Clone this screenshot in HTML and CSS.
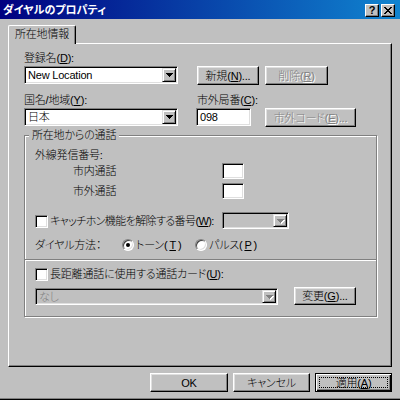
FILE: index.html
```html
<!DOCTYPE html>
<html lang="ja">
<head>
  <meta charset="UTF-8">
  <title>ダイヤルのプロパティ</title>
  <link rel="stylesheet" href="styles.css">
</head>
<body>
  <div class="window">
    <!-- Title Bar -->
    <div class="titlebar">
      <span class="title">ダイヤルのプロパティ</span>
      <div class="caption-btns">
        <span class="cap-btn">?</span>
        <span class="cap-btn">
          <svg width="8" height="7" viewBox="0 0 8 7" shape-rendering="crispEdges">
            <path d="M0 0h2v1h1v1h2v-1h1v-1h2v1h-1v1h-1v1h-1v1h1v1h1v1h1v1h-2v-1h-1v-1h-2v1h-1v1h-2v-1h1v-1h1v-1h1v-1h-1v-1h-1v-1h-1z" fill="#000"/>
          </svg>
        </span>
      </div>
    </div>

    <div class="content">
      <!-- Tabs -->
      <div class="tabs">
        <div class="tab">所在地情報</div>
      </div>

      <!-- Tab Panel -->
      <div class="panel">
        <div class="label">登録名(<u>D</u>):</div>
        <div class="ctrl-row">
          <div class="combo combo-main">
            <span class="combo-text">New Location</span>
            <span class="drop"><svg width="7" height="4" viewBox="0 0 7 4" shape-rendering="crispEdges"><path d="M0 0h7v1h-1v1h-1v1h-1v1h-1v-1h-1v-1h-1v-1h-1z"/></svg></span>
          </div>
          <button class="btn btn-new">新規(<u>N</u>)...</button>
          <button class="btn btn-del" disabled>削除(<u>R</u>)</button>
        </div>

        <div class="label-row">
          <div class="label label-country">国名/地域(<u>Y</u>):</div>
          <div class="label">市外局番(<u>C</u>):</div>
        </div>
        <div class="ctrl-row">
          <div class="combo combo-main">
            <span class="combo-text">日本</span>
            <span class="drop"><svg width="7" height="4" viewBox="0 0 7 4" shape-rendering="crispEdges"><path d="M0 0h7v1h-1v1h-1v1h-1v1h-1v-1h-1v-1h-1v-1h-1z"/></svg></span>
          </div>
          <div class="field field-code">098</div>
          <button class="btn btn-code" disabled>市外コード(<u>E</u>)...</button>
        </div>

        <!-- Calls from this location -->
        <fieldset class="group">
          <legend>所在地からの通話</legend>
          <div class="sub-label">外線発信番号:</div>
          <div class="num-row">
            <span class="num-label">市内通話</span>
            <span class="field field-small"></span>
          </div>
          <div class="num-row num-row-second">
            <span class="num-label">市外通話</span>
            <span class="field field-small"></span>
          </div>

          <div class="check-row">
            <span class="checkbox"></span>
            <span class="check-label">キャッチホン機能を解除する番号(<u>W</u>):</span>
            <div class="combo combo-wait disabled">
              <span class="combo-text"></span>
              <span class="drop"><svg width="7" height="4" viewBox="0 0 7 4" shape-rendering="crispEdges"><path d="M0 0h7v1h-1v1h-1v1h-1v1h-1v-1h-1v-1h-1v-1h-1z"/></svg></span>
            </div>
          </div>

          <div class="radio-row">
            <span class="radio-label">ダイヤル方法：</span>
            <span class="radio-opt radio-opt-first"><span class="radio on"></span>トーン(<u>T</u>)</span>
            <span class="radio-opt"><span class="radio"></span>パルス(<u>P</u>)</span>
          </div>

          <div class="separator"></div>

          <div class="check-row2">
            <span class="checkbox"></span>
            <span>長距離通話に使用する通話カード(<u>U</u>):</span>
          </div>
          <div class="card-row">
            <div class="combo combo-card disabled">
              <span class="combo-text">なし</span>
              <span class="drop"><svg width="7" height="4" viewBox="0 0 7 4" shape-rendering="crispEdges"><path d="M0 0h7v1h-1v1h-1v1h-1v1h-1v-1h-1v-1h-1v-1h-1z"/></svg></span>
            </div>
            <button class="btn btn-change">変更(<u>G</u>)...</button>
          </div>
        </fieldset>
      </div>

      <!-- Dialog Buttons -->
      <div class="footer">
        <button class="btn btn-footer btn-ok">OK</button>
        <button class="btn btn-footer">キャンセル</button>
        <button class="btn btn-footer btn-default"><span class="focus">適用(<u>A</u>)</span></button>
      </div>
    </div>
  </div>
</body>
</html>
```

FILE: styles.css
```css
/* Reset */
* {
  margin: 0;
  padding: 0;
  box-sizing: border-box;
}

body {
  width: 400px;
  height: 400px;
  overflow: hidden;
  background: #c0c0c0;
  font-family: "Liberation Sans", "Noto Sans CJK JP", sans-serif;
  font-size: 11px;
  font-weight: 300;
  line-height: 14px;
  letter-spacing: -0.2px;
  color: #000;
  font-feature-settings: "palt";
}

u {
  text-decoration: underline;
  text-underline-offset: 1px;
}

/* Window */
.window {
  width: 400px;
  height: 400px;
  background: #c0c0c0;
  border-bottom: 1px solid #000;
  box-shadow: inset 0 -1px #808080;
}

.titlebar {
  height: 19px;
  display: flex;
  align-items: center;
  justify-content: space-between;
  padding: 0 5px 0 3px;
  background: linear-gradient(to right, #000080, #1084d0);
  color: #fff;
}

.title {
  font-weight: bold;
  font-size: 11px;
  letter-spacing: 0;
}

.caption-btns {
  display: flex;
  gap: 2px;
  margin-top: 1px;
}

.cap-btn {
  width: 14px;
  height: 13px;
  display: flex;
  align-items: center;
  justify-content: center;
  background: #c0c0c0;
  border: 1px solid;
  border-color: #fff #000 #000 #fff;
  box-shadow: inset -1px -1px #808080;
  color: #000;
  font-weight: bold;
  font-size: 11px;
  line-height: 11px;
}

.content {
  padding: 6px 8px 0;
}

/* Tabs */
.tabs {
  display: flex;
  height: 18px;
}

.tab {
  position: relative;
  z-index: 1;
  width: 68px;
  height: 19px;
  padding-left: 6px;
  line-height: 16px;
  background: #c0c0c0;
  border-top: 1px solid #fff;
  border-left: 1px solid #fff;
  border-right: 1px solid #000;
  border-radius: 2px 2px 0 0;
  box-shadow: inset -1px 0 #808080;
}

.panel {
  height: 324px;
  padding: 7px 0 0 15px;
  border: 1px solid;
  border-color: #fff #000 #000 #fff;
  box-shadow: inset -1px -1px #808080;
}

.label {
  height: 14px;
  white-space: nowrap;
}

.label-row {
  display: flex;
  margin-top: 8px;
}

.label-country {
  width: 173px;
}

.ctrl-row {
  display: flex;
  align-items: flex-start;
  margin-top: 1px;
}

/* Sunken fields */
.combo,
.field {
  display: flex;
  align-items: center;
  background: #fff;
  border: 1px solid;
  border-color: #808080 #fff #fff #808080;
  box-shadow: inset 1px 1px #000, inset -1px -1px #dfdfdf;
}

.combo {
  height: 18px;
  padding: 1px;
  justify-content: space-between;
}

.combo-main {
  width: 154px;
}

.combo-text {
  padding-left: 2px;
  white-space: nowrap;
}

.drop {
  width: 14px;
  height: 14px;
  display: flex;
  align-items: center;
  justify-content: center;
  background: #c0c0c0;
  border: 1px solid;
  border-color: #dfdfdf #000 #000 #dfdfdf;
  box-shadow: inset 1px 1px #fff, inset -1px -1px #808080;
}

.drop svg {
  fill: #000;
}

.combo.disabled {
  background: #c0c0c0;
  height: 17px;
}

.combo.disabled .drop {
  height: 13px;
}

.combo.disabled .drop svg {
  fill: #808080;
  filter: drop-shadow(1px 1px 0 #fff);
}

.combo.disabled .combo-text {
  color: #808080;
}

.field {
  height: 18px;
  padding-left: 3px;
}

.field-code {
  width: 55px;
  margin-left: 18px;
}

.field-small {
  width: 22px;
  height: 16px;
}

/* Buttons */
.btn {
  font: inherit;
  letter-spacing: inherit;
  height: 19px;
  display: flex;
  align-items: center;
  justify-content: center;
  background: #c0c0c0;
  color: #000;
  border: 1px solid;
  border-color: #fff #000 #000 #fff;
  box-shadow: inset -1px -1px #808080, inset 1px 1px #dfdfdf;
  white-space: nowrap;
}

.btn:disabled {
  color: #808080;
  text-shadow: 1px 1px 0 #fff;
}

.btn-new {
  width: 62px;
  margin-left: 19px;
}

.btn-del {
  width: 63px;
  margin-left: 6px;
}

.btn-code {
  width: 91px;
  margin-left: 14px;
}

/* Group box */
.group {
  width: 353px;
  margin-top: 1px;
  padding: 6px 8px 11px 10px;
  border: 1px solid #808080;
  box-shadow: inset 1px 1px #fff, 1px 1px #fff;
}

.group legend {
  margin-left: -6px;
  padding: 0 3px;
  line-height: 14px;
  background: #c0c0c0;
}

.sub-label {
  height: 14px;
}

.num-row {
  display: flex;
  align-items: center;
  margin-top: 1px;
}

.num-row-second {
  margin-top: 4px;
}

.num-label {
  width: 149px;
  margin-left: 38px;
}

.check-row {
  display: flex;
  align-items: flex-end;
  margin-top: 13px;
}

.checkbox {
  flex: none;
  width: 13px;
  height: 13px;
  margin-right: 2px;
  background: #fff;
  border: 1px solid;
  border-color: #808080 #fff #fff #808080;
  box-shadow: inset 1px 1px #000, inset -1px -1px #dfdfdf;
}

.check-row .checkbox {
  margin-bottom: 1px;
}

.check-label {
  width: 172px;
  white-space: nowrap;
  align-self: center;
  letter-spacing: -0.6px;
}

.combo-wait {
  width: 67px;
}

.radio-row {
  display: flex;
  align-items: center;
  height: 14px;
  margin-top: 9px;
}

.radio-label {
  width: 87px;
}

.radio-opt {
  display: flex;
  align-items: center;
  gap: 2px;
}

.radio-opt-first {
  width: 73px;
}

.radio {
  width: 12px;
  height: 12px;
  display: flex;
  align-items: center;
  justify-content: center;
  border-radius: 50%;
  background: #fff;
  border: 1px solid;
  border-color: #808080 #fff #fff #808080;
  box-shadow: inset 1px 1px #404040, inset -1px -1px #dfdfdf;
}

.radio.on::after {
  content: "";
  width: 4px;
  height: 4px;
  border-radius: 50%;
  background: #000;
}

.separator {
  height: 2px;
  margin: 7px -8px 0 -10px;
  border-top: 1px solid #808080;
  border-bottom: 1px solid #fff;
}

.check-row2 {
  display: flex;
  align-items: center;
  height: 14px;
  margin-top: 6px;
}

.card-row {
  display: flex;
  align-items: flex-end;
  margin-top: 6px;
}

.combo-card {
  width: 243px;
}

.btn-change {
  width: 62px;
  height: 18px;
  margin-left: 16px;
}

/* Footer */
.footer {
  display: flex;
  justify-content: flex-end;
  gap: 5px;
  margin-top: 6px;
}

.btn-footer {
  width: 77px;
}

.btn-ok {
  width: 78px;
}

.btn-default {
  border-color: #000;
  box-shadow: inset 1px 1px #fff, inset -1px -1px #000, inset -2px -2px #808080;
}

.focus {
  display: flex;
  align-items: center;
  justify-content: center;
  width: calc(100% - 6px);
  height: calc(100% - 6px);
  border: 1px dotted #000;
}
```
